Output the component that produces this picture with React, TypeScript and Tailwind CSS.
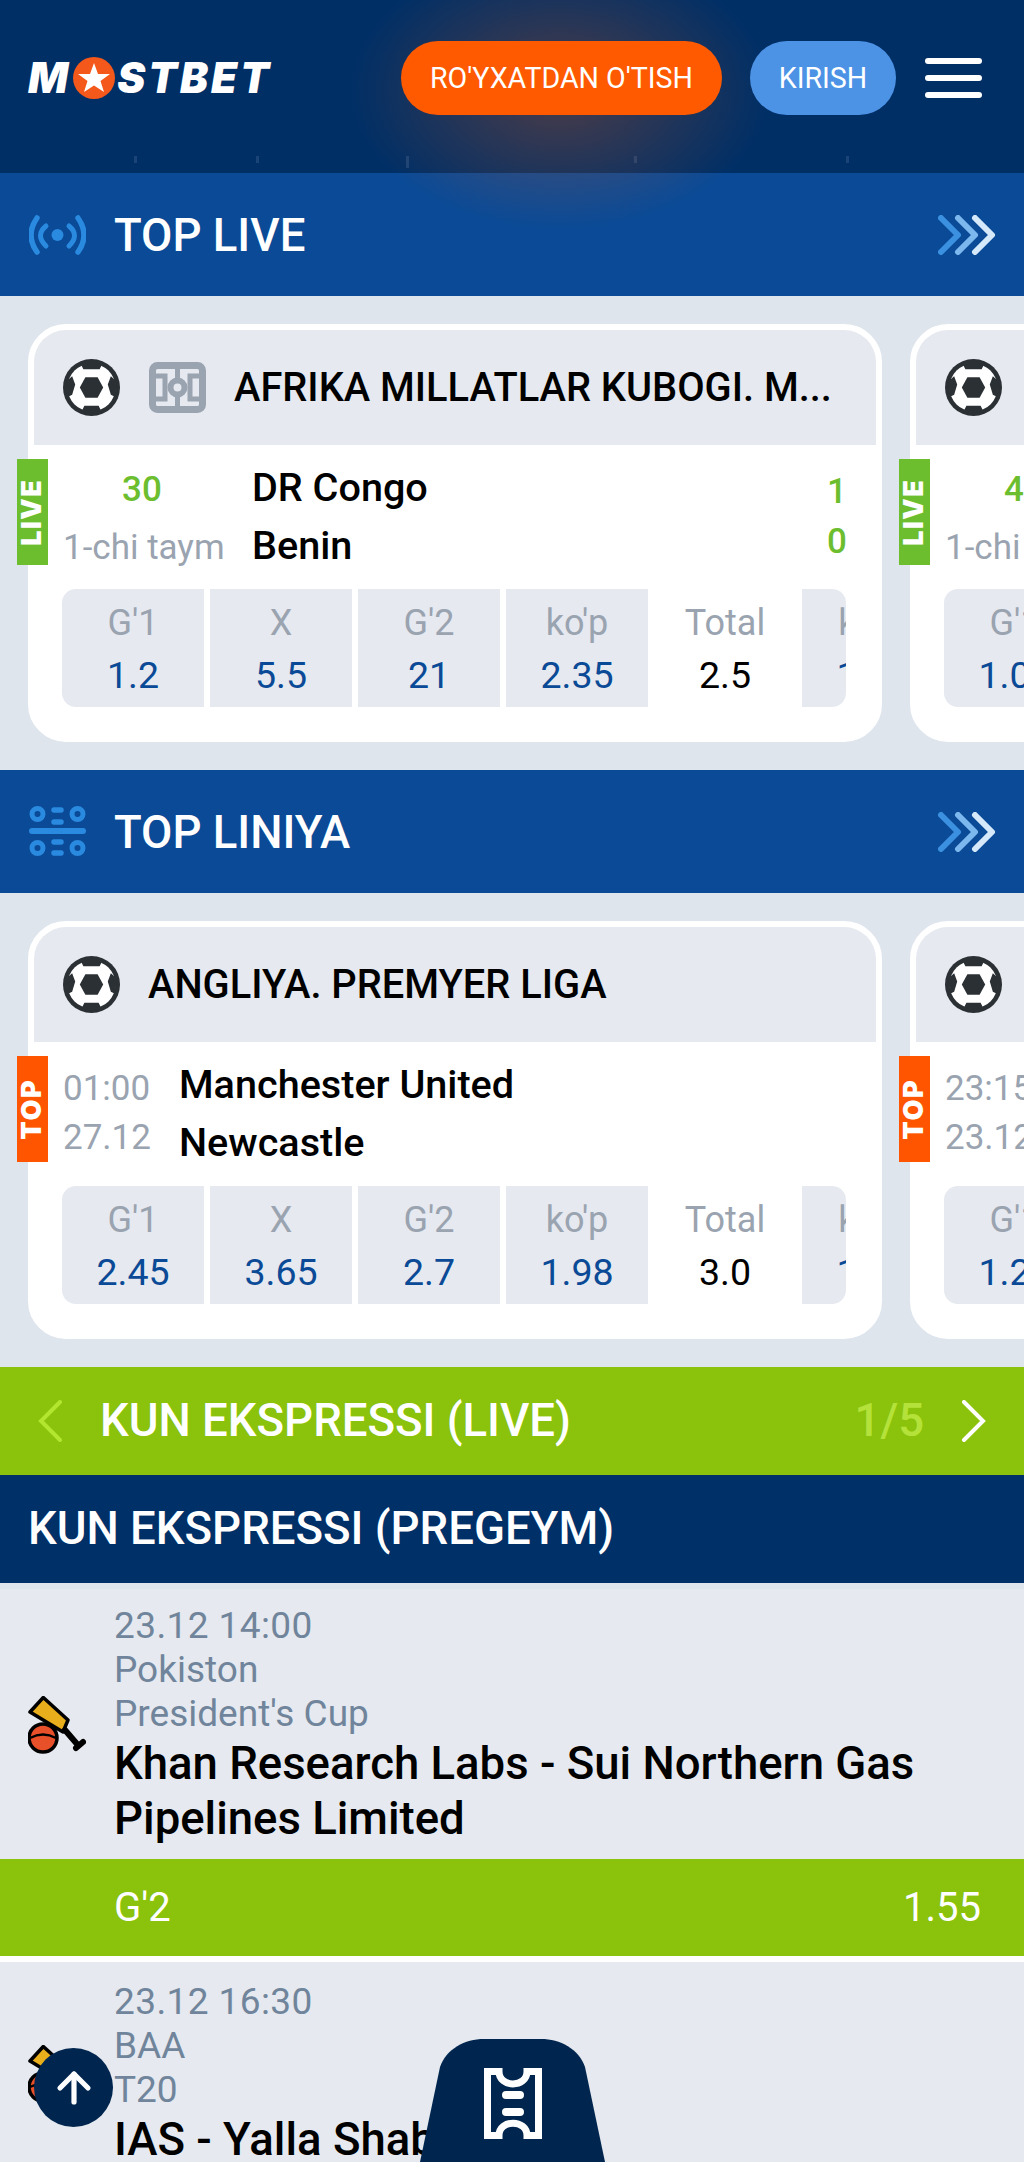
import { ArrowUp } from 'lucide-react';

type Odd = { label: string; value: string; plain?: boolean };

const FONT = { fontFamily: 'Roboto, sans-serif' };

const BallIcon = () => (
    <svg viewBox="0 0 56 56" className="w-[57px] h-[57px] shrink-0">
        <circle cx="28" cy="28" r="28" fill="#2b3035" />
        <circle cx="28" cy="28" r="23.500" fill="#fff" />
        <path d="M17 4 L39 4 L36 10 L20 10 Z M18 52 L38 52 L35 46 L21 46 Z" fill="#2b3035" />
        <path d="M3 22 L9 17 L12 25 L9 35 L5 37 Z M53 22 L47 17 L44 25 L47 35 L51 37 Z" fill="#2b3035" />
        <path d="M22 18 H34 L39.500 28 L34 38 H22 L16.500 28 Z" fill="#2b3035" />
    </svg>
);

const FieldIcon = () => (
    <svg viewBox="0 0 57 51" className="w-[57px] h-[51px] shrink-0" fill="none" stroke="#9aa3b0">
        <rect x="3.500" y="3.500" width="50" height="44" rx="5" strokeWidth="7" />
        <path d="M28.500 3 V48" strokeWidth="5" />
        <path d="M3 14 H16 V37 H3 M54 14 H41 V37 H54" strokeWidth="5" />
        <circle cx="28.500" cy="25.500" r="7" fill="#e6e9ef" strokeWidth="6" />
    </svg>
);

const LiveIcon = () => (
    <svg viewBox="0 0 57 40" className="w-[57px] h-[40px]" fill="none" stroke="#2a8ae0" strokeLinecap="round">
        <circle cx="28.500" cy="20" r="6" fill="#2a8ae0" stroke="none" />
        <path d="M17 11 Q6 20 17 31 M40 11 Q51 20 40 31" strokeWidth="5" />
        <path d="M8 3 Q-4 20 8 37 M49 3 Q61 20 49 37" strokeWidth="5.500" />
    </svg>
);

const SlidersIcon = () => (
    <svg viewBox="0 0 57 51" className="w-[57px] h-[51px]" fill="none" stroke="#2a8ae0">
        <circle cx="8.500" cy="8" r="5.500" strokeWidth="5" />
        <circle cx="48.500" cy="8" r="5.500" strokeWidth="5" />
        <circle cx="8.500" cy="42" r="5.500" strokeWidth="5" />
        <circle cx="48.500" cy="42" r="5.500" strokeWidth="5" />
        <path d="M3 25 H54" strokeWidth="6" strokeLinecap="round" />
        <path d="M25 4 H32 M25 16 H32 M25 36 H32 M25 47 H32" strokeWidth="5.500" strokeLinecap="round" />
    </svg>
);

const TripleChevron = () => (
    <svg viewBox="0 0 58 40" className="w-[58px] h-[40px]" fill="none" strokeWidth="6" strokeLinecap="round" strokeLinejoin="round">
        <path d="M3 3 L20 20 L3 37" stroke="#3b90e0" />
        <path d="M20 3 L37 20 L20 37" stroke="#7cb7ee" />
        <path d="M37 3 L54 20 L37 37" stroke="#d5e9fb" />
    </svg>
);

const CricketIcon = () => (
    <svg viewBox="0 0 58 58" className="w-[58px] h-[58px] shrink-0">
        <path d="M15.300 1.500 L40 24 L35 36 L2 16 Z" fill="#e9ae1c" stroke="#000" strokeWidth="3.500" strokeLinejoin="round" />
        <path d="M37 34 L49 48" stroke="#000" strokeWidth="6" strokeLinecap="round" />
        <path d="M48 52 L55 46" stroke="#000" strokeWidth="6" strokeLinecap="round" />
        <circle cx="15" cy="42" r="14" fill="#e8502a" stroke="#000" strokeWidth="3.500" />
        <path d="M2 42 Q15 35 28 42" fill="none" stroke="#000" strokeWidth="2.500" />
    </svg>
);

const TicketIcon = () => (
    <svg viewBox="0 0 58 71" className="w-[58px] h-[71px]" fill="none" stroke="#fff" strokeWidth="7">
        <path d="M3.500 3.500 H15 C15 20 43 20 43 3.500 H54.500 V67.500 H43 C43 51 15 51 15 67.500 H3.500 Z" />
        <path d="M22 27 H36 M22 44 H36" strokeWidth="8" strokeLinecap="round" />
    </svg>
);

const SectionTitle = ({ icon, title }: { icon: React.ReactNode; title: string }) => (
    <div className="h-[123px] bg-[#0a4a96] flex items-center pl-[28px] pr-[28px]">
        <div className="w-[58px] flex justify-center">{icon}</div>
        <span className="ml-[28px] pt-[3px] text-[45.500px] font-medium text-white">{title}</span>
        <div className="ml-auto">
            <TripleChevron />
        </div>
    </div>
);

const MatchCard = ({
    tag,
    showField,
    title,
    left,
    leftWidth,
    teams,
    scores,
    odds,
}: {
    tag: 'LIVE' | 'TOP';
    showField?: boolean;
    title: string;
    left: React.ReactNode;
    leftWidth: string;
    teams: string[];
    scores?: string[];
    odds: Odd[];
}) => (
    <div className="w-[854px] h-[418px] shrink-0 border-[6px] border-white rounded-[38px] bg-white">
        <div className="h-[115px] bg-[#e6e9ef] rounded-t-[32px] flex items-center pl-[29px] pb-[1px]">
            <BallIcon />
            {showField && (
                <div className="ml-[29px]">
                    <FieldIcon />
                </div>
            )}
            <span className="ml-[28px] pt-[1px] text-[39.800px] font-medium text-black whitespace-nowrap">{title}</span>
        </div>
        <div className="relative flex pl-[29px] pr-[29px] pt-[14px] h-[144px]">
            <div
                className={`absolute left-[-17px] top-[14px] w-[31px] h-[106px] flex items-center justify-center ${
                    tag === 'LIVE' ? 'bg-[#6cbe2f]' : 'bg-[#ff5500]'
                }`}
            >
                <span className="-rotate-90 font-['Inter'] text-[27px] font-black text-white tracking-[1.500px]">{tag}</span>
            </div>
            <div className={`${leftWidth} shrink-0 text-center`}>{left}</div>
            <div className="ml-[31px] text-[39.600px] leading-[58px] font-medium text-black whitespace-nowrap">
                {teams.map((team) => (
                    <div key={team}>{team}</div>
                ))}
            </div>
            {scores && (
                <div className="ml-auto pt-[8px] text-right text-[35px] leading-[50px] font-medium text-[#6cbe2f]">
                    {scores.map((score, i) => (
                        <div key={i}>{score}</div>
                    ))}
                </div>
            )}
        </div>
        <div className="ml-[28px] w-[784px] h-[118px] rounded-[14px] overflow-hidden flex gap-[6px]">
            {odds.map((odd) => (
                <div
                    key={odd.label}
                    className={`w-[142px] shrink-0 text-center ${odd.plain ? '' : 'bg-[#e6e9ef]'}`}
                >
                    <div className="pt-[9px] text-[36px] leading-[50px] text-[#9aa3b0]">{odd.label}</div>
                    <div className={`text-[37.500px] leading-[54px] ${odd.plain ? 'text-black' : 'text-[#0a4a96]'}`}>
                        {odd.value}
                    </div>
                </div>
            ))}
        </div>
    </div>
);

const LiveLeft = ({ minute }: { minute: string }) => (
    <>
        <div className="text-[35px] leading-[61px] font-medium text-[#6cbe2f]">{minute}</div>
        <div className="text-[35px] leading-[55px] text-[#9aa3b0] whitespace-nowrap">1-chi taym</div>
    </>
);

const TimeLeft = ({ time, date }: { time: string; date: string }) => (
    <div className="pt-[8px] text-[35px] leading-[49px] text-[#9aa3b0] whitespace-nowrap">
        <div>{time}</div>
        <div>{date}</div>
    </div>
);

const ExpressItem = ({
    date,
    country,
    league,
    teams,
    bet,
    coef,
}: {
    date: string;
    country: string;
    league: string;
    teams: string;
    bet?: string;
    coef?: string;
}) => (
    <div className="mt-[6px] bg-[#e6e9ef] last:pt-[3px]">
        <div className="flex items-center pl-[28px] pr-[40px] pt-[15px] pb-[13px]">
            <CricketIcon />
            <div className="ml-[28px] min-w-0">
                <div className="text-[37px] leading-[44px] text-[#70859b]">
                    <div className="tracking-[0.400px]">{date}</div>
                    <div>{country}</div>
                    <div>{league}</div>
                </div>
                <div className="text-[45.500px] leading-[55px] font-medium text-black">{teams}</div>
            </div>
        </div>
        {bet && (
            <div className="h-[97px] bg-[#8ac20c] flex items-center justify-between pl-[114px] pr-[43px] text-[40px] text-white">
                <span>{bet}</span>
                <span>{coef}</span>
            </div>
        )}
    </div>
);

const TICKS = [
    'left-[134px] h-[7px]',
    'left-[256px] h-[7px]',
    'left-[406px] h-[12px]',
    'left-[634px] h-[7px]',
    'left-[846px] h-[7px]',
];

export default function App() {
    return (
        <div className="relative w-[1024px] h-[2162px] overflow-hidden bg-[#dfe5ed]" style={FONT}>
            <div className="relative h-[173px] bg-[#002f66] flex items-start pl-[28px] pr-[42px] pt-[41px]">
                {TICKS.map((tick) => (
                    <div key={tick} className={`absolute top-[156px] w-[3px] bg-[#1a4478] ${tick}`} />
                ))}
                <div className="flex items-center h-[74px] font-['Inter'] text-[42px] leading-none font-black italic text-white tracking-[3px]">
                    <span>M</span>
                    <svg viewBox="0 0 42 42" className="w-[42px] h-[42px] mx-[2px] shrink-0">
                        <circle cx="21" cy="21" r="21" fill="#f4581a" />
                        <path d="M21 6 L25 17 L37 17 L27.500 24 L31 35 L21 28.500 L11 35 L14.500 24 L5 17 L17 17 Z" fill="#fff" />
                    </svg>
                    <span>STBET</span>
                </div>
                <div className="relative z-20 ml-auto w-[321px] h-[74px] rounded-full bg-[#ff5a00] flex items-center justify-center text-[28.600px] text-white whitespace-nowrap">
                    RO'YXATDAN O'TISH
                </div>
                <div className="relative z-20 ml-[28px] w-[146px] h-[74px] rounded-full bg-[#4c93e6] flex items-center justify-center text-[28.600px] text-white">
                    KIRISH
                </div>
                <div className="ml-[29px] w-[57px] h-[74px] flex flex-col justify-center gap-[11px]">
                    <div className="h-[6px] rounded-full bg-white" />
                    <div className="h-[6px] rounded-full bg-white" />
                    <div className="h-[6px] rounded-full bg-white" />
                </div>
            </div>

            <SectionTitle icon={<LiveIcon />} title="TOP LIVE" />
            <div className="flex gap-[28px] pl-[28px] py-[28px]">
                <MatchCard
                    tag="LIVE"
                    showField
                    title="AFRIKA MILLATLAR KUBOGI. M..."
                    left={<LiveLeft minute="30" />}
                    leftWidth="w-[158px]"
                    teams={['DR Congo', 'Benin']}
                    scores={['1', '0']}
                    odds={[
                        { label: "G'1", value: '1.2' },
                        { label: 'X', value: '5.5' },
                        { label: "G'2", value: '21' },
                        { label: "ko'p", value: '2.35' },
                        { label: 'Total', value: '2.5', plain: true },
                        { label: 'kam', value: '1.55' },
                    ]}
                />
                <MatchCard
                    tag="LIVE"
                    title="AFRIKA MILLATLAR KUBOGI"
                    left={<LiveLeft minute="45" />}
                    leftWidth="w-[158px]"
                    teams={['Senegal', 'Botsvana']}
                    odds={[{ label: "G'1", value: '1.05' }]}
                />
            </div>

            <SectionTitle icon={<SlidersIcon />} title="TOP LINIYA" />
            <div className="flex gap-[28px] pl-[28px] py-[28px]">
                <MatchCard
                    tag="TOP"
                    title="ANGLIYA. PREMYER LIGA"
                    left={<TimeLeft time="01:00" date="27.12" />}
                    leftWidth="w-[85px]"
                    teams={['Manchester United', 'Newcastle']}
                    odds={[
                        { label: "G'1", value: '2.45' },
                        { label: 'X', value: '3.65' },
                        { label: "G'2", value: '2.7' },
                        { label: "ko'p", value: '1.98' },
                        { label: 'Total', value: '3.0', plain: true },
                        { label: 'kam', value: '1.85' },
                    ]}
                />
                <MatchCard
                    tag="TOP"
                    title="ANGLIYA. PREMYER LIGA"
                    left={<TimeLeft time="23:15" date="23.12" />}
                    leftWidth="w-[85px]"
                    teams={['Chelsea', 'Fulham']}
                    odds={[{ label: "G'1", value: '1.25' }]}
                />
            </div>

            <div className="h-[108px] bg-[#8ac20c] flex items-center text-white pl-[38px] pr-[37px]">
                <svg viewBox="0 0 24 42" className="w-[24px] h-[42px]" fill="none" stroke="#b3e62f" strokeWidth="4" strokeLinecap="round">
                    <path d="M22 2 L3 21 L22 40" />
                </svg>
                <span className="ml-[38px] text-[45.500px] font-medium">KUN EKSPRESSI (LIVE)</span>
                <span className="ml-auto text-[45.500px] font-medium text-[#b5e23a]">1/5</span>
                <svg viewBox="0 0 24 42" className="ml-[37px] w-[26px] h-[42px]" fill="none" stroke="#fff" strokeWidth="4" strokeLinecap="round">
                    <path d="M2 2 L21 21 L2 40" />
                </svg>
            </div>
            <div className="h-[108px] bg-[#003068] flex items-center pl-[28px] pt-[1px] text-[45.500px] font-medium text-white">
                KUN EKSPRESSI (PREGEYM)
            </div>
            <div className="bg-white">
                <ExpressItem
                    date="23.12 14:00"
                    country="Pokiston"
                    league="President's Cup"
                    teams="Khan Research Labs - Sui Northern Gas Pipelines Limited"
                    bet="G'2"
                    coef="1.55"
                />
                <ExpressItem
                    date="23.12 16:30"
                    country="BAA"
                    league="T20"
                    teams="IAS - Yalla Shabab"
                />
            </div>

            <div className="absolute z-10 left-[350px] top-[-50px] w-[420px] h-[280px] pointer-events-none bg-[radial-gradient(closest-side,rgba(255,90,0,0.3),rgba(255,90,0,0))]" />

            <div className="absolute left-[34px] top-[2048px] w-[79px] h-[79px] rounded-full bg-[#00264f] flex items-center justify-center">
                <ArrowUp className="w-[48px] h-[48px] text-white" strokeWidth={2.6} />
            </div>
            <div className="absolute left-[420px] top-[2039px] w-[185px] h-[123px] flex justify-center pt-[29px]">
                <svg viewBox="0 0 185 123" className="absolute inset-0 w-[185px] h-[123px]">
                    <path d="M0 123 L20 28 C26 10 45 0 64 0 L121 0 C140 0 159 10 165 28 L185 123 Z" fill="#00264f" />
                </svg>
                <div className="relative">
                    <TicketIcon />
                </div>
            </div>
        </div>
    );
}
